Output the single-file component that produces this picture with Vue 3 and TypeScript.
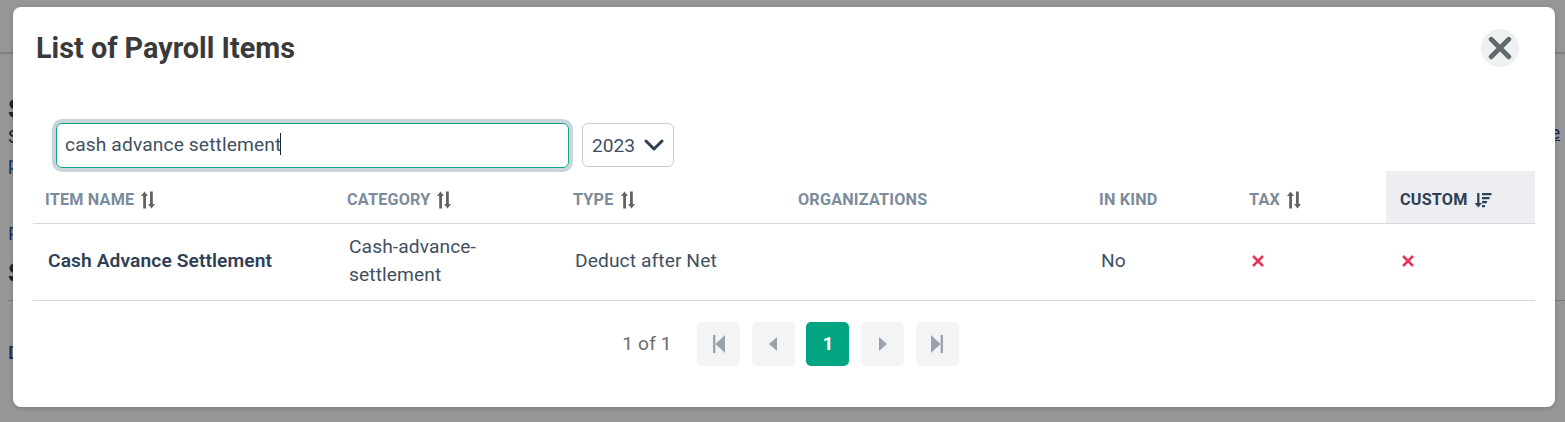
<script setup lang="ts">
interface Col { label: string; sort: 'none' | 'both' | 'active'; width: number }
const cols: Col[] = [
  { label: 'ITEM NAME', sort: 'both', width: 300 },
  { label: 'CATEGORY', sort: 'both', width: 226 },
  { label: 'TYPE', sort: 'both', width: 225 },
  { label: 'ORGANIZATIONS', sort: 'none', width: 301 },
  { label: 'IN KIND', sort: 'none', width: 150 },
  { label: 'TAX', sort: 'both', width: 151 },
  { label: 'CUSTOM', sort: 'active', width: 149 },
]
</script>

<template>
  <div class="page">
    <header class="page-head"></header>
    <main class="page-body">
      <div class="bg-h">S</div>
      <div class="bg-t">S</div>
      <div class="bg-l">p</div>
      <div class="bg-l second">P</div>
      <div class="bg-h third">S</div>
      <hr class="bg-rule" />
      <div class="bg-l fourth">D</div>
    </main>
    <a class="bg-link">e</a>

    <div class="overlay">
      <section class="modal">
        <div class="modal-head">
          <h2>List of Payroll Items</h2>
          <button class="close" aria-label="Close">
            <svg width="24" height="24" viewBox="0 0 24 24"><path d="M3.2 3.2 20.8 20.8M20.8 3.2 3.2 20.8" fill="none" stroke="#5f6b6b" stroke-width="4.8" stroke-linecap="round" /></svg>
          </button>
        </div>

        <div class="filters">
          <div class="search">cash advance settlement<span class="caret"></span></div>
          <div class="year">
            <span>2023</span>
            <svg width="20" height="12" viewBox="0 0 20 12"><path d="M2 2 10 10 18 2" fill="none" stroke="#2f4054" stroke-width="3" stroke-linecap="round" stroke-linejoin="round" /></svg>
          </div>
        </div>

        <table>
          <colgroup><col v-for="c in cols" :key="c.label" :style="{ width: c.width + 'px' }" /></colgroup>
          <thead>
            <tr>
              <th v-for="c in cols" :key="c.label" :class="{ active: c.sort === 'active' }">
                <span class="th-in">
                  {{ c.label }}
                  <svg v-if="c.sort === 'both'" width="16" height="18" viewBox="0 0 16 18" fill="#636363">
                    <path d="M4.5 0.5 8 5H6V17.5H3.2V5H1Z" />
                    <path d="M11.5 17.5 8 13H10V0.5H12.8V13H15Z" />
                  </svg>
                  <svg v-else-if="c.sort === 'active'" width="18" height="16" viewBox="0 0 18 16" fill="#2f4054">
                    <path d="M3.2 1H5.4V11H8L4.3 15.5.6 11H3.2Z" />
                    <path d="M8 1H17.5V3.2H8ZM8 5H15.5V7.2H8ZM8 9H13V11.2H8ZM8 13H11V15.2H8Z" />
                  </svg>
                </span>
              </th>
            </tr>
          </thead>
          <tbody>
            <tr>
              <td class="name">Cash Advance Settlement</td>
              <td>Cash-advance-<br />settlement</td>
              <td>Deduct after Net</td>
              <td></td>
              <td>No</td>
              <td><svg class="x" width="14" height="14" viewBox="0 0 14 14"><path d="M2 2 12 12M12 2 2 12" stroke="#e8345a" stroke-width="2.5" fill="none" /></svg></td>
              <td class="last"><svg class="x" width="14" height="14" viewBox="0 0 14 14"><path d="M2 2 12 12M12 2 2 12" stroke="#e8345a" stroke-width="2.5" fill="none" /></svg></td>
            </tr>
          </tbody>
        </table>

        <nav class="pager">
          <span class="count">1 of 1</span>
          <button class="pg"><svg width="14" height="18" viewBox="0 0 14 18" fill="#9aa3ad"><path d="M1 0H3.4V18H1ZM13 0V18L3.4 9Z" /></svg></button>
          <button class="pg"><svg width="10" height="14" viewBox="0 0 10 14" fill="#9aa3ad"><path d="M9 0V14L1 7Z" /></svg></button>
          <button class="pg current">1</button>
          <button class="pg"><svg width="10" height="14" viewBox="0 0 10 14" fill="#9aa3ad"><path d="M1 0V14L9 7Z" /></svg></button>
          <button class="pg"><svg width="14" height="18" viewBox="0 0 14 18" fill="#9aa3ad"><path d="M10.6 0H13V18H10.6ZM1 0V18L10.6 9Z" /></svg></button>
        </nav>
      </section>
    </div>
  </div>
</template>

<style>
html, body { margin: 0; background: #fff; }
</style>

<style scoped>
.page { position: relative; width: 1565px; height: 422px; overflow: hidden; font-family: Roboto, "Liberation Sans", sans-serif; color: #2f4054; background: #fff; }
.page-head { height: 52px; border-bottom: 2px solid #dcdcdc; }
.page-body { padding: 41px 0 0 8px; }
.bg-h { font-size: 26px; font-weight: 700; line-height: 28px; height: 32px; }
.bg-t { font-size: 19.2px; line-height: 20px; height: 27px; }
.bg-l { font-size: 19.2px; line-height: 20px; color: #1f5fa8; }
.second { margin-top: 50px; }
.third { margin-top: 15px; height: 28px; }
.bg-rule { margin: 13px 0 0; border: 0; border-top: 1px solid #ccc; }
.fourth { margin-top: 42px; font-weight: 500; }
.bg-link { position: absolute; left: 1550px; top: 121px; color: #1f3fa8; text-decoration: underline; font-size: 19.2px; }
.overlay { position: absolute; inset: 0; background: rgba(0, 0, 0, 0.41); display: flex; align-items: flex-start; padding: 7px 10px 0 13px; box-sizing: border-box; }
.modal { width: 1542px; height: 400px; background: #fff; border-radius: 8px; box-sizing: border-box; padding: 0 20px; box-shadow: 0 1px 4px rgba(0,0,0,.2); }
.modal-head { display: flex; justify-content: space-between; align-items: flex-start; padding: 22px 16px 0 3px; height: 85px; box-sizing: border-box; }
h2 { margin: 0; font-size: 28.8px; line-height: 38px; font-weight: 700; color: #3a3a3a; }
.close { width: 38px; height: 38px; border: 0; border-radius: 50%; background: #eef0f1; padding: 0; display: flex; align-items: center; justify-content: center; }
.filters { display: flex; align-items: center; gap: 13px; padding: 27px 0 0 23px; height: 79px; box-sizing: border-box; }
.search { width: 513px; height: 45px; box-sizing: border-box; border: 1px solid #0ea487; border-radius: 6px; box-shadow: 0 0 0 4px #c9d4dc; padding: 0 8px 2px; display: flex; align-items: center; font-size: 19.2px; letter-spacing: .13px; color: #3f5062; }
.caret { width: 1px; height: 22px; background: #222; margin-left: -1px; }
.year { width: 92px; height: 44px; box-sizing: border-box; border: 1px solid #c6ced6; border-radius: 6px; display: flex; align-items: center; justify-content: space-between; padding: 0 9px; font-size: 19.2px; color: #3f5062; }
table { width: 1502px; border-collapse: collapse; table-layout: fixed; }
th { height: 52px; padding: 6px 0 0 14px; box-sizing: border-box; text-align: left; border-bottom: 1px solid #d8dadc; font-size: 16.2px; letter-spacing: .2px; font-weight: 700; color: #7c8b9b; vertical-align: middle; }
th:first-child { padding-left: 12px; }
th.active { background: #eceef1; color: #2f4054; }
.th-in { display: inline-flex; align-items: center; gap: 6px; }
td { height: 77px; padding: 0 0 2px 16px; box-sizing: border-box; border-bottom: 1px solid #d8dadc; font-size: 19.2px; letter-spacing: .1px; line-height: 28px; color: #3f5062; vertical-align: middle; }
td:first-child { padding-left: 15px; }
td.last { padding-left: 15px; }
td.name { font-weight: 600; color: #2f4054; }
.x { display: block; }
.pager { display: flex; align-items: center; justify-content: center; padding: 21px 0 0 13px; gap: 11.6px; }
.count { font-size: 19.2px; letter-spacing: .1px; color: #6b6b6b; margin-right: 14px; }
.pg { width: 43px; height: 44px; border: 0; border-radius: 5px; background: #f3f4f6; padding: 0; display: flex; align-items: center; justify-content: center; font-family: inherit; }
.current { background: #02a582; color: #fff; font-size: 19.2px; font-weight: 700; }
</style>
